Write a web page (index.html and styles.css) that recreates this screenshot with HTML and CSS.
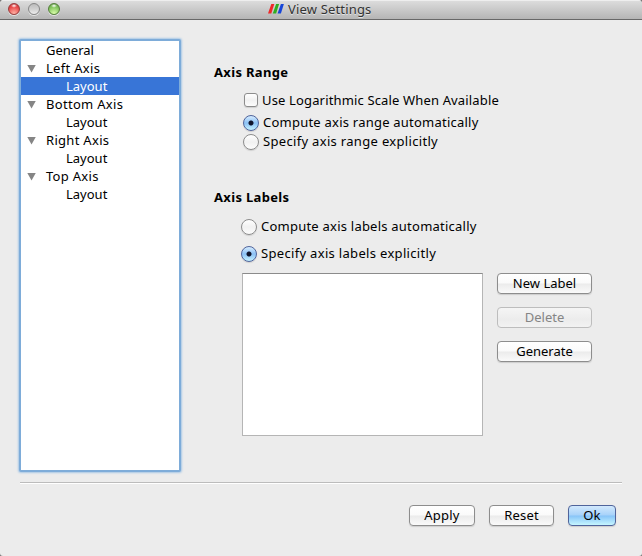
FILE: index.html
```html
<!DOCTYPE html>
<html lang="en">
<head>
<meta charset="utf-8">
<title>View Settings</title>
<link rel="stylesheet" href="styles.css">
</head>
<body>
<div class="window">
  <header class="titlebar">
    <div class="lights"><span class="light red"></span><span class="light gray"></span><span class="light green"></span></div>
    <svg class="logo" width="16" height="12" viewBox="0 0 16 12"><path fill="#ee2929" d="M3.3 1H6.3L3.3 10.5H0z"/><path fill="#2fae20" d="M8.1 1h3L8.1 10.5H4.8z"/><path fill="#1746d8" d="M12.9 1h3l-3 9.5H9.6z"/></svg>
    <span class="title">View Settings</span>
  </header>
  <div class="content">
    <nav class="tree">
      <div class="row">General</div>
      <div class="row group">Left Axis</div>
      <div class="row child selected">Layout</div>
      <div class="row group">Bottom Axis</div>
      <div class="row child">Layout</div>
      <div class="row group">Right Axis</div>
      <div class="row child">Layout</div>
      <div class="row group">Top Axis</div>
      <div class="row child">Layout</div>
    </nav>
    <main class="panel">
      <section class="range">
        <h2>Axis Range</h2>
        <label class="option log"><span class="check"></span><span class="text">Use Logarithmic Scale When Available</span></label>
        <label class="option auto"><span class="radio on"></span><span class="text">Compute axis range automatically</span></label>
        <label class="option explicit"><span class="radio"></span><span class="text">Specify axis range explicitly</span></label>
      </section>
      <section class="labels">
        <h2>Axis Labels</h2>
        <label class="option auto"><span class="radio"></span><span class="text">Compute axis labels automatically</span></label>
        <label class="option explicit"><span class="radio on"></span><span class="text">Specify axis labels explicitly</span></label>
        <div class="editor">
          <div class="list"></div>
          <div class="actions">
            <button>New Label</button>
            <button disabled>Delete</button>
            <button>Generate</button>
          </div>
        </div>
      </section>
    </main>
  </div>
  <footer class="footer">
    <button class="apply">Apply</button>
    <button class="reset">Reset</button>
    <button class="ok">Ok</button>
  </footer>
</div>
</body>
</html>
```
FILE: styles.css
```css
* { box-sizing: border-box; }
body { margin: 0; background: #777; }
.window {
  width: 642px;
  height: 556px;
  overflow: hidden;
  border-radius: 4px 4px 3px 3px;
  background: #ececec;
  font: 13px/18px "Noto Sans", "Open Sans", sans-serif;
  color: #000;
  white-space: nowrap;
}
.titlebar {
  position: relative;
  display: flex;
  height: 20px;
  padding-left: 268px;
  background: linear-gradient(#dedede, #b5b5b5);
  border-bottom: 1px solid #686868;
  box-shadow: inset 0 1px #eee;
}
.lights { position: absolute; left: 8px; top: 3px; display: flex; gap: 8px; }
.light {
  width: 12px;
  height: 12px;
  border: 1px solid;
  border-radius: 50%;
  box-shadow: 0 1px #e5e5e5;
}
.red { border-color: #963c3c; background: radial-gradient(ellipse 3px 2px at 50% 18%, #fff, transparent), radial-gradient(circle at 50% 95%, #ffb5a8, #e94747 65%, #c13737); }
.gray { border-color: #858585; background: linear-gradient(#bcbcbc, #d0d0d0 50%, #ededed); }
.green { border-color: #547d3b; background: radial-gradient(ellipse 3px 2px at 50% 18%, #fff, transparent), radial-gradient(circle at 50% 95%, #dcffac, #7fc25b 65%, #5b9742); }
.logo { margin: 3px 4px 0 0; }
.title { color: #333; line-height: 19px; letter-spacing: .17px; text-shadow: 0 1px #e3e3e3; }
.content { display: flex; padding: 19px 0 0 19px; height: 462px; }
.tree {
  width: 162px;
  height: 433px;
  border: 2px solid #7eacd9;
  border-radius: 2px;
  background: #fff;
  box-shadow: 0 0 2px 1px #a9c8e6;
}
.row { display: flex; align-items: center; height: 18px; padding-left: 25px; }
.group { padding-left: 6px; letter-spacing: .3px; }
.group::before {
  content: "";
  width: 9px;
  height: 8px;
  margin: 1px 10px 0 0;
  background: #858585;
  clip-path: polygon(0 0, 100% 0, 50% 100%);
}
.child { padding-left: 45px; }
.selected { background: #3875d7; color: #fff; }
.panel { padding: 24px 0 0 33px; }
h2 { margin: 0; font: bold 13px/18px "Noto Sans", "Open Sans", sans-serif; letter-spacing: .33px; }
.option { display: flex; align-items: center; height: 18px; gap: 4px; }
.radio + .text { padding-bottom: 2px; }
.range .option { margin-left: 29px; }
.range .log { margin: 10px 0 4px 30px; letter-spacing: .15px; }
.range .auto { height: 20px; }
.auto { letter-spacing: .23px; }
.explicit { letter-spacing: .32px; }
.labels { margin-top: 37px; }
.labels .option { margin: 12px 0 0 27px; }
.labels .option + .option { margin-top: 9px; }
.check, .radio { flex: none; border: 1px solid #8c8c8c; background: linear-gradient(#fff, #f1f1f1 50%, #fcfcfc); box-shadow: 0 1px 1px #cfcfcf; }
.check { width: 14px; height: 14px; border-radius: 3px; }
.radio { width: 16px; height: 16px; border-radius: 50%; }
.on {
  border-color: #50649b;
  background: radial-gradient(circle at 50% 50%, #10152c 2px, transparent 3px), linear-gradient(#d6ecff, #8bc1f5 50%, #c5f2ff);
}
.editor { display: flex; gap: 14px; margin: 10px 0 0 28px; }
.list { width: 241px; height: 163px; background: #fff; border: 1px solid #b5b5b5; border-top-color: #8b8b8b; }
.actions { display: flex; flex-direction: column; gap: 13px; }
button {
  height: 21px;
  width: 95px;
  padding: 0 0 1px;
  border: 1px solid #8d8d8d;
  border-radius: 4px;
  background: linear-gradient(#fff, #fafafa 48%, #ebebeb 52%, #fafafa);
  box-shadow: 0 1px 1px #cecece;
  font: 13px/18px "Noto Sans", "Open Sans", sans-serif;
  color: #000;
}
button:disabled { border-color: #bdbdbd; background: linear-gradient(#f5f5f5, #ececec 60%, #f2f2f2); color: #858585; box-shadow: none; }
.footer {
  display: flex;
  height: 74px;
  margin: 0 20px;
  padding: 22px 6px 0 0;
  justify-content: flex-end;
  gap: 14px;
  border-top: 1px solid #bcbcbc;
  box-shadow: inset 0 1px #fff;
}
.footer button { letter-spacing: .2px; }
.apply { width: 66px; }
.reset { width: 65px; }
.ok { width: 48px; border-color: #50649b; background: linear-gradient(#d2e9fd, #a7d2f9 48%, #87c4f8 52%, #c6f6ff); }
```
